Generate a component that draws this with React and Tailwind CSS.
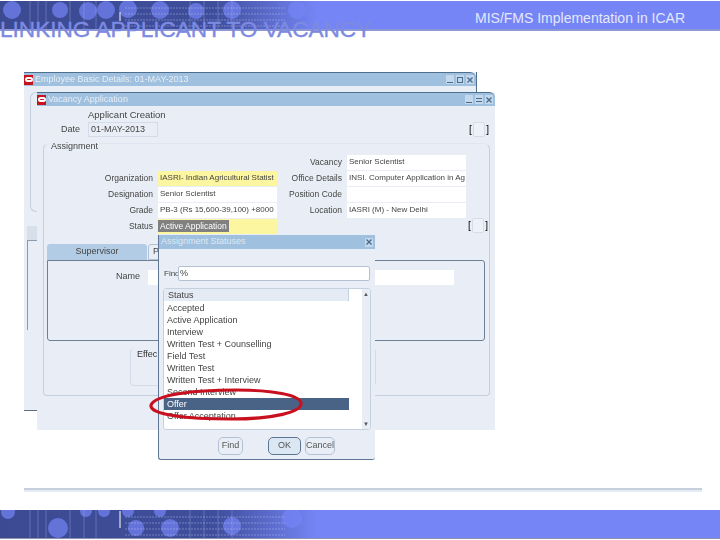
const topDots = [[12, 9, 9], [60, 9, 8], [88, 10, 9], [106, 9, 9], [128, 8, 9], [160, 9, 9], [196, 10, 8], [232, 9, 9], [297, 9, 9]]
const bottomDots = [[8, 2, 7], [58, 18, 10], [86, 1, 6], [104, 1, 6], [128, 1, 6], [160, 1, 6], [136, 18, 8], [170, 18, 9], [232, 16, 9], [292, 8, 10]]

function Banner({ dots, height, markFrom, markTo }) {
  return (
    <svg width="720" height={height} className="block">
      <defs>
        <linearGradient id="fade" x1="0" x2="1" y1="0" y2="0">
          <stop offset="0" stopColor="#3c4a92" />
          <stop offset="0.3" stopColor="#3f4e9c" />
          <stop offset="0.44" stopColor="#7585f5" />
          <stop offset="1" stopColor="#7585f5" />
        </linearGradient>
      </defs>
      <rect width="720" height={height} fill="url(#fade)" />
      {dots.map(([x, y, r]) => (
        <circle key={`${x}-${y}`} cx={x} cy={y} r={r} fill="#7585f5" opacity="0.7" />
      ))}
      {[30, 38, 46, 70, 84, 96, 190, 204, 218, 232].map(x => (
        <line key={x} x1={x} x2={x} y1="0" y2={height} stroke="#aab4e8" strokeOpacity="0.35" />
      ))}
      {[7, 13, 19, 25].map(y => (
        <line key={y} x1="125" x2="285" y1={y} y2={y} stroke="#c5cdf5" strokeOpacity="0.4" strokeDasharray="2 1" />
      ))}
      <line x1="120" x2="120" y1={markFrom} y2={markTo} stroke="#fff" />
    </svg>
  )
}

function OracleIcon() {
  return (
    <span className="flex h-[10px] w-[9px] shrink-0 items-center justify-center bg-[#c5141c]">
      <span className="h-[5px] w-[8px] rounded-full border-2 border-white" />
    </span>
  )
}

function WinButton({ kind }) {
  return (
    <span className="flex h-[9px] w-[8px] items-center justify-center bg-[#c3d8ec]">
      <svg width="6" height="6" viewBox="0 0 6 6">
        {kind === 'min' && <path d="M0 5.5h6" stroke="#4a6a8a" />}
        {kind === 'max' && <rect x="0.5" y="0.5" width="5" height="5" fill="none" stroke="#4a6a8a" />}
        {kind === 'rest' && <path d="M0 1.5h6M0 4.5h6" stroke="#4a6a8a" />}
        {kind === 'close' && <path d="M0.5 0.5l5 5M5.5 0.5l-5 5" stroke="#4a6a8a" strokeWidth="1.3" />}
      </svg>
    </span>
  )
}

function TitleBar({ title, buttons }) {
  return (
    <div className="flex h-[14px] items-center gap-[2px] rounded-tr-[6px] border-t border-[#4f6f8f] bg-[#9fc0de] pr-[2px]">
      <OracleIcon />
      <span className="flex-1 truncate text-[9px] text-[#e6eef7]">{title}</span>
      {buttons.map(b => <WinButton key={b} kind={b} />)}
    </div>
  )
}

function Field({ label, value, labelWidth, tint, selected }) {
  return (
    <div className="flex h-[16px] items-center">
      <span className="text-right text-[8.5px] text-[#444]" style={{ width: labelWidth }}>{label}</span>
      <div className={`ml-[5px] flex h-[15px] w-[119px] items-center whitespace-nowrap pl-[2px] text-[8px] text-[#444] ${tint ? 'bg-[#fdf6a0]' : 'bg-white'}`}>
        {selected ? <span className="-ml-[2px] bg-[#808080] px-[2px] text-[8.5px] text-white">{value}</span> : value}
      </div>
    </div>
  )
}

function Bracket() {
  return (
    <div className="flex h-[15px] w-[20px] items-center justify-between text-[10px] leading-none text-black">
      <span>[</span>
      <span className="h-[15px] w-[12px] rounded-[2px] border border-[#d3dce8] bg-[#eef2f8]" />
      <span>]</span>
    </div>
  )
}

function DialogButton({ label, isDefault, width }) {
  return (
    <div
      className={`flex h-[18px] items-center justify-center rounded-[5px] border text-[9px] text-[#555] ${isDefault ? 'border-[#5d7594] bg-[#dbe7f3]' : 'border-[#b3c1d2] bg-[#e9eef6]'}`}
      style={{ width }}
    >
      {label}
    </div>
  )
}

const statuses = ['Accepted', 'Active Application', 'Interview', 'Written Test + Counselling', 'Field Test', 'Written Test', 'Written Test + Interview', 'Second Interview', 'Offer', 'Offer Acceptation']

export default function App() {
  return (
    <div className="relative h-[540px] w-[720px] overflow-hidden bg-white font-['Liberation_Sans',Arial,sans-serif]">
      {/* Slide header */}
      <div className="pt-px">
        <Banner dots={topDots} height={28} markFrom={11} markTo={20} />
        <div className="h-[2px] bg-[#8c97d6]" />
      </div>
      <h1 className="absolute left-0 top-[17px] whitespace-nowrap text-[22.6px] font-normal leading-[26px] text-[#7d8ae2] [-webkit-text-stroke:0.4px_#7d8ae2]">
        LINKING APPLICANT TO VACANCY
      </h1>
      <div className="absolute left-[475px] top-[10px] text-[14px] leading-[16px] text-[#e4e8ff]">
        MIS/FMS Implementation in ICAR
      </div>

      {/* Back window */}
      <div className="absolute left-[24px] top-[72px] h-[338px] w-[453px] border-r border-[#4f6f8f] bg-[#e9eef6] blur-[0.4px]">
        <TitleBar title="Employee Basic Details: 01-MAY-2013" buttons={['min', 'max', 'close']} />
        <div className="ml-[6px] mt-[6px] h-[120px] rounded-l-md border border-r-0 border-[#c5d0de]" />
        <div className="ml-[3px] mt-[14px] h-[14px] w-[10px] bg-[#d6dfea]" />
        <div className="ml-[3px] h-[90px] w-[10px] border-l border-t border-[#8a9bb0]" />
      </div>
      <div className="absolute left-[24px] top-[410px] h-px w-[14px] bg-[#5f6f80]" />

      {/* Front window */}
      <div className="absolute left-[37px] top-[92px] h-[338px] w-[458px] bg-[#e9eef6] blur-[0.4px]">
        <TitleBar title="Vacancy Application" buttons={['min', 'rest', 'close']} />
        <div className="ml-[51px] mt-[2px] h-[14px] text-[9.5px] leading-[14px] text-[#444]">Applicant Creation</div>
        <div className="flex h-[15px] items-center pr-[6px]">
          <span className="w-[43px] text-right text-[9px] text-[#444]">Date</span>
          <div className="ml-[8px] flex h-[15px] w-[70px] items-center border border-[#d3dce8] pl-[2px] text-[9px] text-[#444]">01-MAY-2013</div>
          <div className="ml-auto"><Bracket /></div>
        </div>

        <div className="relative ml-[6px] mr-[5px] mt-[6px] h-[253px] rounded-t-md rounded-b-sm border border-[#c5d0de] border-t-[#dfe6f0]">
          <div className="absolute -top-[4px] left-[6px] bg-[#e9eef6] px-px text-[9px] leading-[12px] text-[#444]">Assignment</div>
          <div className="flex pt-[10px]">
            <div className="pt-[16px]">
              <Field label="Organization" value="IASRI- Indian Agricultural Statist" labelWidth={109} tint />
              <Field label="Designation" value="Senior Scientist" labelWidth={109} />
              <Field label="Grade" value="PB-3 (Rs 15,600-39,100) +8000" labelWidth={109} />
              <Field label="Status" value="Active Application" labelWidth={109} tint selected />
            </div>
            <div>
              <Field label="Vacancy" value="Senior Scientist" labelWidth={65} />
              <Field label="Office Details" value="INSI. Computer Application in Ag" labelWidth={65} />
              <Field label="Position Code" value="" labelWidth={65} />
              <Field label="Location" value="IASRI (M) - New Delhi" labelWidth={65} />
              <div className="-mr-[22px] flex h-[16px] justify-end"><Bracket /></div>
            </div>
          </div>

          <div className="ml-[3px] mt-[10px] flex">
            <div className="flex h-[16px] w-[100px] items-center justify-center rounded-t-[3px] bg-[#b1cce4] text-[9px] text-[#444]">Supervisor</div>
            <div className="ml-px h-[16px] w-[30px] rounded-t-[3px] border border-[#b3c1d2] pl-[4px] text-[9px] text-[#444]">P</div>
          </div>
          <div className="ml-[3px] mr-[4px] h-[81px] rounded-b-[3px] rounded-tr-[3px] border border-[#6d7f95] pt-[8px]">
            <div className="flex h-[16px] items-center">
              <span className="w-[92px] text-right text-[9px] text-[#444]">Name</span>
              <div className="ml-[8px] h-[15px] w-[306px] bg-white" />
            </div>
          </div>
          <div className="ml-[86px] mt-[7px] h-[38px] w-[246px] rounded-[4px] border border-t-0 border-[#d3dce8] pl-[6px] text-[9px] text-[#333]">Effec</div>
        </div>
      </div>

      {/* List of values dialog */}
      <div className="absolute left-[158px] top-[235px] flex h-[225px] w-[217px] flex-col rounded-b-[3px] border-b border-l border-[#5f7594] bg-[#e9eef6] blur-[0.4px]">
        <div className="flex h-[14px] items-center justify-between bg-[#9fc0de] px-[2px]">
          <span className="text-[9px] text-[#dfe9f4]">Assignment Statuses</span>
          <WinButton kind="close" />
        </div>
        <div className="ml-[5px] mt-[17px] flex h-[15px] items-center">
          <span className="w-[14px] text-[8px] text-[#444]">Find</span>
          <div className="flex h-[15px] w-[192px] items-center rounded-[2px] border border-[#b3c1d2] bg-white pl-[1px] text-[9px] text-[#444]">%</div>
        </div>
        <div className="ml-[4px] mt-[7px] flex h-[142px] w-[208px] overflow-hidden rounded-[3px] border border-[#c5d0de] bg-white">
          <div className="flex-1">
            <div className="h-[12px] w-[185px] border-r border-[#c5d0de] bg-[#e5ebf4] pl-[4px] text-[9px] leading-[12px] text-[#444]">Status</div>
            <div className="w-[185px] pt-[1px]">
              {statuses.map(s => (
                <div
                  key={s}
                  className={`h-[12px] pl-[3px] text-[9px] leading-[12px] ${s === 'Offer' ? 'bg-[#496387] text-white' : 'text-[#444]'}`}
                >
                  {s}
                </div>
              ))}
            </div>
          </div>
          <div className="flex w-[8px] flex-col justify-between bg-[#e9eef6] text-center text-[6px] leading-[10px] text-[#555]">
            <span>▲</span>
            <span>▼</span>
          </div>
        </div>
        <div className="ml-[59px] mt-[7px] flex items-center">
          <DialogButton label="Find" width={25} />
          <div className="ml-[25px]"><DialogButton label="OK" isDefault width={33} /></div>
          <div className="ml-[4px]"><DialogButton label="Cancel" width={30} /></div>
        </div>
      </div>

      {/* Red hand-drawn marker */}
      <svg className="absolute left-[146px] top-[386px]" width="160" height="36" viewBox="0 0 160 36" fill="none">
        <path d="M5 19C9 9 46 4 90 4C126 4 154 9 155 17C156 26 128 33 85 33C42 33 3 29 5 19Z" stroke="#c8101f" strokeWidth="3.2" />
      </svg>

      {/* Slide footer */}
      <div className="absolute left-[24px] top-[488px] h-[4px] w-[678px] border-t-2 border-[#c5d0dc] bg-[#e6ecf5]" />
      <div className="absolute left-0 top-[510px] w-[720px] border-b border-[#8a92b0]">
        <Banner dots={bottomDots} height={28} markFrom={1} markTo={18} />
      </div>
    </div>
  )
}
